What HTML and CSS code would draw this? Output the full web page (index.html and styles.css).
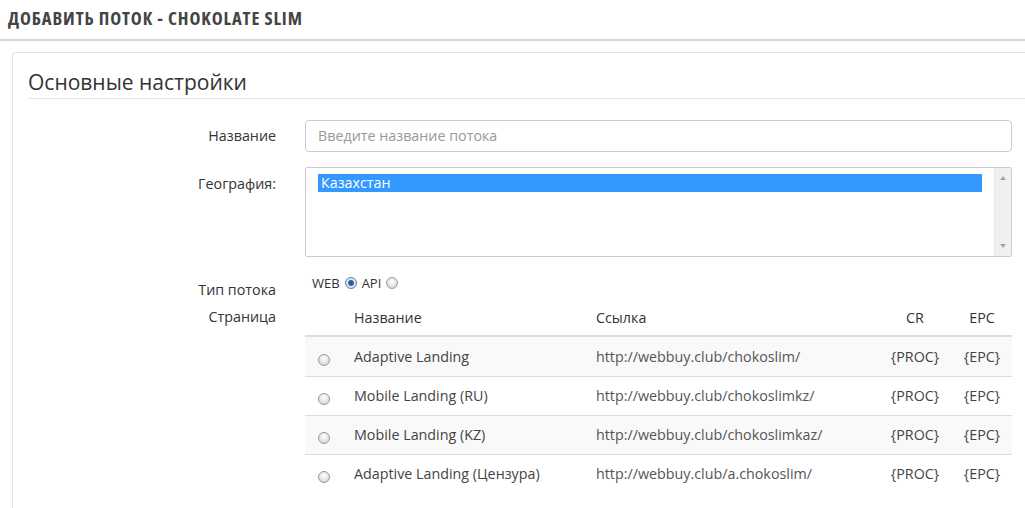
FILE: index.html
```html
<!DOCTYPE html>
<html lang="ru">
<head>
    <meta charset="UTF-8">
    <title>Добавить поток - Chokolate Slim</title>
    <link rel="stylesheet" href="styles.css">
</head>
<body>
    <div class="page-header">
        <h1>ДОБАВИТЬ ПОТОК - CHOKOLATE SLIM</h1>
    </div>
    <div class="panel">
        <div class="legend">Основные настройки</div>
        <div class="form-row">
            <label class="control-label">Название</label>
            <div class="control">
                <div class="input">Введите название потока</div>
            </div>
        </div>
        <div class="form-row">
            <label class="control-label geo">География:</label>
            <div class="control">
                <div class="select">
                    <div class="options">
                        <div class="option selected">Казахстан</div>
                    </div>
                    <div class="scrollbar">
                        <span class="arrow up"></span>
                        <span class="arrow down"></span>
                    </div>
                </div>
            </div>
        </div>
        <div class="form-row type-row">
            <label class="control-label">Тип потока</label>
            <div class="control radios">
                WEB <span class="radio checked"></span> API <span class="radio"></span>
            </div>
        </div>
        <div class="form-row page-row">
            <label class="control-label">Страница</label>
            <div class="control">
                <table class="table">
                    <thead>
                        <tr>
                            <th class="col-radio"></th>
                            <th class="col-name">Название</th>
                            <th class="col-link">Ссылка</th>
                            <th class="col-cr">CR</th>
                            <th class="col-epc">EPC</th>
                        </tr>
                    </thead>
                    <tbody>
                        <tr>
                            <td class="col-radio"><span class="radio"></span></td>
                            <td>Adaptive Landing</td>
                            <td class="link">http://webbuy.club/chokoslim/</td>
                            <td class="col-cr">{PROC}</td>
                            <td class="col-epc">{EPC}</td>
                        </tr>
                        <tr>
                            <td class="col-radio"><span class="radio"></span></td>
                            <td>Mobile Landing (RU)</td>
                            <td class="link">http://webbuy.club/chokoslimkz/</td>
                            <td class="col-cr">{PROC}</td>
                            <td class="col-epc">{EPC}</td>
                        </tr>
                        <tr>
                            <td class="col-radio"><span class="radio"></span></td>
                            <td>Mobile Landing (KZ)</td>
                            <td class="link">http://webbuy.club/chokoslimkaz/</td>
                            <td class="col-cr">{PROC}</td>
                            <td class="col-epc">{EPC}</td>
                        </tr>
                        <tr>
                            <td class="col-radio"><span class="radio"></span></td>
                            <td>Adaptive Landing (Цензура)</td>
                            <td class="link">http://webbuy.club/a.chokoslim/</td>
                            <td class="col-cr">{PROC}</td>
                            <td class="col-epc">{EPC}</td>
                        </tr>
                    </tbody>
                </table>
            </div>
        </div>
    </div>
</body>
</html>
```

FILE: styles.css
```css
body {
    margin: 0;
    font-family: "Open Sans", Arial, sans-serif;
    font-size: 14.3px;
    color: #333;
    background: #fff;
    overflow: hidden;
    height: 508px;
}
.page-header {
    height: 39px;
    border-bottom: 2px solid #d6d6d6;
    padding-left: 8px;
}
.page-header h1 {
    margin: 0;
    padding-top: 6px;
    font-size: 18.5px;
    font-weight: 700;
    font-stretch: condensed;
    letter-spacing: 0.9px;
    color: #444;
    line-height: 24px;
}
.panel {
    margin: 11px 0 0 12px;
    width: 1040px;
    border: 1px solid #e3e3e3;
    border-bottom: none;
    border-radius: 4px 4px 0 0;
    padding: 0 0 0 15px;
    height: 455px;
}
.legend {
    margin-top: 14px;
    font-size: 21px;
    line-height: 30px;
    color: #333;
    border-bottom: 1px solid #e5e5e5;
    padding-bottom: 1px;
    margin-bottom: 21px;
}
.form-row {
    display: flex;
    margin-bottom: 15px;
}
.control-label {
    width: 248px;
    text-align: right;
    padding-top: 6px;
    line-height: 20px;
    color: #333;
    flex-shrink: 0;
}
.control-label.geo {
    padding-top: 7px;
}
.control {
    margin-left: 29px;
    width: 707px;
}
.input {
    height: 32px;
    box-sizing: border-box;
    border: 1px solid #ccc;
    border-radius: 4px;
    padding: 6px 12px;
    line-height: 18px;
    color: #999;
}
.select {
    height: 90px;
    box-sizing: border-box;
    border: 1px solid #ccc;
    border-radius: 2px;
    display: flex;
}
.options {
    flex: 1;
    padding: 6px 12px 0 12px;
}
.option {
    height: 18px;
    line-height: 18px;
    padding-left: 3px;
}
.option.selected {
    background: #3399ff;
    color: #fff;
}
.scrollbar {
    width: 16px;
    background: #f0f0f0;
    border-left: 1px solid #e6e6e6;
    position: relative;
}
.arrow {
    position: absolute;
    left: 5px;
    width: 0;
    height: 0;
    border-left: 3px solid transparent;
    border-right: 3px solid transparent;
}
.arrow.up {
    top: 8px;
    border-bottom: 4px solid #a3a3a3;
}
.arrow.down {
    bottom: 8px;
    border-top: 4px solid #a3a3a3;
}
.type-row {
    margin-top: 17px;
    margin-bottom: 0;
}
.type-row .control-label {
    padding-top: 6px;
}
.radios {
    font-size: 13px;
    line-height: 16px;
    padding-left: 7px;
    color: #333;
    display: flex;
    align-items: center;
    gap: 5px;
    height: 16px;
    margin-top: 1px;
}
.radio {
    display: inline-block;
    width: 10px;
    height: 10px;
    border-radius: 50%;
    border: 1px solid #9a9a9a;
    background: radial-gradient(circle at 50% 35%, #ffffff 0%, #dcdcdc 70%, #c8c8c8 100%);
    vertical-align: middle;
}
.radio.checked {
    border-color: #6a7d94;
    background: radial-gradient(circle, #1f4f8a 0, #2d6cb5 2.5px, #dfe8f2 3.5px, #c9d4e0 100%);
}
.page-row {
    margin-top: 0;
}
.page-row .control-label {
    padding-top: 7px;
}
.table {
    width: 707px;
    table-layout: fixed;
    border-collapse: collapse;
    margin-top: 4px;
}
.table th {
    text-align: left;
    font-weight: 400;
    color: #333;
    height: 32px;
    padding: 0 8px 7px 8px;
    box-sizing: border-box;
    border-bottom: 2px solid #ddd;
    vertical-align: bottom;
    line-height: 20px;
}
.table td {
    height: 37px;
    padding: 0 8px 1px 8px;
    border-top: 1px solid #ddd;
    color: #444;
    vertical-align: middle;
}
.table tbody tr:nth-child(odd) td {
    background: #f9f9f9;
}
.table tbody tr:first-child td {
    border-top: none;
    height: 38px;
}
.table td.link {
    color: #555;
}
.table th.col-radio {
    width: 41px;
}
.table th.col-name {
    width: 242px;
}
.table th.col-link {
    width: 290px;
}
.table th.col-cr {
    width: 74px;
}
.table th.col-epc {
    width: 60px;
}
.table td.col-radio {
    padding-left: 13px;
}
.col-radio .radio {
    margin-top: 4px;
}
.col-cr,
.col-epc {
    text-align: center !important;
}
```
